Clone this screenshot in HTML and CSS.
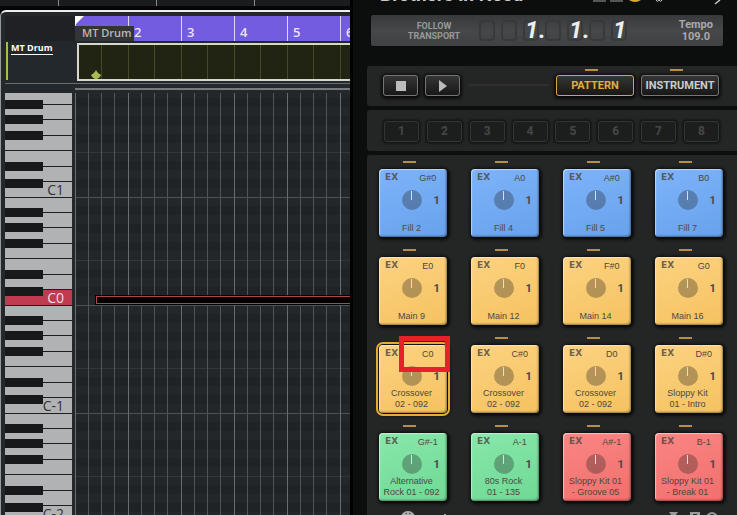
FILE: index.html
```
<!DOCTYPE html>
<html lang="en">
<head>
    <meta charset="UTF-8">
    <meta name="viewport" content="width=device-width, initial-scale=1.0">
    <title>MT Drum</title>
    <link rel="stylesheet" href="styles.css">
</head>
<body>
    <section class="editor">
        <div class="topbar"></div>
        <div class="frame">
            <div class="head">
                <div class="corner"></div>
                <div class="ruler">
                    <svg class="flag" width="9" height="9"><path d="M0 0H9L0 9Z" fill="#fff"/></svg>
                    <span class="part-name">MT Drum</span>
                    <span class="bar"></span>
                    <span class="bar">2</span>
                    <span class="bar">3</span>
                    <span class="bar">4</span>
                    <span class="bar">5</span>
                    <span class="bar">6</span>
                </div>
            </div>
            <div class="track">
                <div class="track-info"><a href="#">MT Drum</a></div>
                <div class="lane">
                    <svg class="marker" width="10" height="10"><path d="M5 0C6 2 8 4 10 5C9 7 8 8 6 9H4C2 8 1 7 0 5C2 4 4 2 5 0Z" fill="#a9bb50"/></svg>
                </div>
            </div>
            <div class="divider"></div>
            <div class="roll">
                <div class="keyboard" id="keyboard"></div>
                <div class="notes">
                    <div class="note"></div>
                </div>
            </div>
        </div>
    </section>

    <section class="plugin">
        <header class="titlebar">
            <h1>Brothers in Need</h1>
            <svg class="title-icons" width="145" height="6">
                <path d="M1 0H14V2H1ZM18 0H31V2H18Z" fill="#555"/>
                <path d="M37 0H49Q43 4 37 0Z" fill="#dba838"/>
                <path d="M64 0Q65 3 67 0Q69 3 70 0" fill="none" stroke="#ccc"/>
                <path d="M123 4L128 0" stroke="#ccc" stroke-width="1.5"/>
            </svg>
        </header>
        <div class="lcd">
            <span class="follow">FOLLOW<br>TRANSPORT</span>
            <div class="position">
                <span class="digit"></span>
                <span class="digit"></span>
                <span class="digit">1<span class="dot">.</span></span>
                <span class="digit"></span>
                <span class="digit">1<span class="dot">.</span></span>
                <span class="digit"></span>
                <span class="digit">1</span>
            </div>
            <span class="tempo">Tempo<br>109.0</span>
        </div>
        <div class="panel transport">
            <button class="btn" aria-label="Stop"><svg width="10" height="10"><path d="M0 0H10V10H0Z" fill="#bbb"/></svg></button>
            <button class="btn" aria-label="Play"><svg width="10" height="12"><path d="M1 0L9 6L1 12Z" fill="#bbb"/></svg></button>
            <span class="groove"></span>
            <div class="tab"><i class="led"></i><button class="btn wide active">PATTERN</button></div>
            <div class="tab"><i class="led"></i><button class="btn wide">INSTRUMENT</button></div>
        </div>
        <div class="panel scenes">
            <button class="scene">1</button>
            <button class="scene">2</button>
            <button class="scene">3</button>
            <button class="scene">4</button>
            <button class="scene">5</button>
            <button class="scene">6</button>
            <button class="scene">7</button>
            <button class="scene">8</button>
        </div>
        <div class="panel pads" id="pads"></div>
        <footer class="footer">
            <svg width="50" height="6"><path d="M1 6Q3 2 7 2Q11 2 13 6M7 2V6M3 5H11" fill="none" stroke="#aaa" stroke-width="2"/><path d="M44 4V6" stroke="#aaa" stroke-width="2"/></svg>
            <svg width="52" height="6"><path d="M0 2H9L6 6H3ZM21 2H31V6H21Z" fill="#999"/><path d="M24 4H28V6H24Z" fill="#252725"/><path d="M38 6Q43 0 48 6" fill="none" stroke="#999" stroke-width="2"/></svg>
        </footer>
    </section>

    <script>
        const keyboard = document.getElementById('keyboard');
        const pads = document.getElementById('pads');

        // One octave is drawn from B (top) down to C
        const whites = ['B', 'A', 'G', 'F', 'E', 'D', 'C'];
        const octaves = ['C1', 'C0', 'C-1', 'C-2'];

        octaves.forEach(name => {
            const octave = document.createElement('div');
            octave.className = 'octave';
            whites.forEach(key => {
                const white = document.createElement('button');
                white.className = 'white key-' + key.toLowerCase();
                white.setAttribute('aria-label', key + name.slice(1));
                if (key === 'C') {
                    white.innerText = name;
                    if (name === 'C0') white.classList.add('pressed');
                }
                octave.appendChild(white);
            });
            keyboard.appendChild(octave);
        });

        const padList = [
            ['G#0', 'Fill 2', 'blue'], ['A0', 'Fill 4', 'blue'], ['A#0', 'Fill 5', 'blue'], ['B0', 'Fill 7', 'blue'],
            ['E0', 'Main 9', 'yellow'], ['F0', 'Main 12', 'yellow'], ['F#0', 'Main 14', 'yellow'], ['G0', 'Main 16', 'yellow'],
            ['C0', 'Crossover<br>02 - 092', 'yellow selected'], ['C#0', 'Crossover<br>02 - 092', 'yellow'],
            ['D0', 'Crossover<br>02 - 092', 'yellow'], ['D#0', 'Sloppy Kit<br>01 - Intro', 'yellow'],
            ['G#-1', 'Alternative<br>Rock 01 - 092', 'green'], ['A-1', '80s Rock<br>01 - 135', 'green'],
            ['A#-1', 'Sloppy Kit 01<br>- Groove 05', 'red'], ['B-1', 'Sloppy Kit 01<br>- Break 01', 'red']
        ];

        padList.forEach(([note, label, type]) => {
            const slot = document.createElement('div');
            slot.className = 'slot';
            slot.innerHTML = `
                <i class="led"></i>
                <button class="pad ${type}">
                    <span class="ex">EX</span><span class="pitch">${note}</span>
                    <span class="knob"></span><span class="count">1</span>
                    <span class="label">${label}</span>
                </button>`;
            if (type.includes('selected')) {
                slot.innerHTML += '<div class="highlight"></div>';
            }
            pads.appendChild(slot);
        });
    </script>
</body>
</html>
```
FILE: styles.css
```
* {
    box-sizing: border-box;
    margin: 0;
    padding: 0;
}

body {
    display: grid;
    grid-template-columns: 350fr 387fr;
    height: 100vh;
    overflow: hidden;
    background-color: #000;
    font-family: "Liberation Sans", Arial, sans-serif;
    color: #bbb;
}

button {
    border: none;
    font-family: inherit;
    cursor: pointer;
}

/* Piano roll */
.editor {
    display: flex;
    flex-direction: column;
    min-width: 0;
    height: 100vh;
    overflow: hidden;
}

.topbar {
    flex: none;
    height: 10px;
    border-bottom: 4px solid #060606;
    background: repeating-linear-gradient(90deg, transparent 0 58px, #888 58px 59px, transparent 59px 98px) #1b1c1e;
}

.frame {
    flex: 1;
    display: flex;
    flex-direction: column;
    min-height: 0;
    padding: 4px 0 0 4px;
    border-top: 2px solid #eee;
    border-left: 1px solid #999;
    border-top-left-radius: 6px;
    background-color: #23282c;
}

.head {
    display: flex;
    flex: none;
    height: 25px;
}

.corner {
    width: 70px;
    background-color: #1f2124;
}

.ruler {
    position: relative;
    display: flex;
    flex: 1;
    overflow: hidden;
    background-color: #735ce0;
}

.flag {
    position: absolute;
    top: 0;
    left: 0;
}

.part-name {
    position: absolute;
    left: 0;
    bottom: 0;
    width: 59px;
    height: 15px;
    padding-left: 7px;
    background-color: #333436;
    color: #b8b8b8;
    font: 600 11px/14px "Open Sans", sans-serif;
    white-space: nowrap;
}

.bar {
    flex: none;
    width: 53px;
    padding: 8px 0 0 5px;
    border-left: 1px solid #ddd8f5;
    color: #e8e4fa;
    font: 600 13px/17px "Open Sans", sans-serif;
}

.track {
    display: flex;
    flex: none;
    height: 43px;
    border-bottom: 1px solid #676b6c;
}

.track-info {
    width: 70px;
    margin: 1px 0 3px 1px;
    padding-left: 3px;
    border-left: 2px solid #a9bb50;
    font: 700 9px/11px "Open Sans", sans-serif;
}

.track-info a {
    color: #fff;
    border-bottom: 1px solid #fff;
    text-decoration: none;
}

.lane {
    position: relative;
    flex: 1;
    margin: 2px 0 2px 1px;
    border: 2px solid #d5d7cf;
    border-right: none;
    background: repeating-linear-gradient(90deg, transparent 0 22px, #454b26 22px 23px, transparent 23px 49px, #454b26 49px 50px, transparent 50px 53px) #222413;
}

.marker {
    position: absolute;
    left: 12px;
    bottom: -1px;
}

.divider {
    flex: none;
    height: 2px;
    margin: 4px 0 3px 70px;
    background-color: #777b7c;
}

.roll {
    display: flex;
    flex: 1;
    min-height: 0;
    overflow: hidden;
}

.keyboard {
    width: 67px;
    margin-top: -3px;
}

.octave {
    display: flex;
    flex-direction: column;
    height: 108px;
}

.white {
    position: relative;
    flex: none;
    height: 15px;
    padding-right: 8px;
    border-bottom: 1px solid #1d1e1f;
    background-color: #b0b2b4;
    color: #333;
    font: 14px/14px "Open Sans", sans-serif;
    text-align: right;
}

.key-g,
.key-e,
.key-c {
    height: 16px;
}

.white::before {
    position: absolute;
    left: 0;
    top: 10px;
    z-index: 1;
    width: 38px;
    height: 9px;
    background-color: #18191a;
}

.key-b::before,
.key-a::before,
.key-g::before,
.key-e::before,
.key-d::before {
    content: "";
}

.key-e::before,
.key-g::before {
    top: 11px;
}

.key-d::before {
    top: 12px;
}

.white.pressed {
    background-color: #c03a50;
    color: #f3dfe2;
}

.notes {
    position: relative;
    flex: 1;
    margin-left: 3px;
    background:
        repeating-linear-gradient(90deg, #686c6e 0 1px, transparent 1px 53px),
        repeating-linear-gradient(90deg, transparent 0 13px, #505558 13px 14px, transparent 14px 26px, #505558 26px 27px, transparent 27px 39px, #505558 39px 40px, transparent 40px 53px),
        repeating-linear-gradient(180deg, transparent 0 59px, #33373a 59px 60px, transparent 60px 104px, #4d5254 104px 105px, transparent 105px 108px),
        repeating-linear-gradient(180deg, #23272a 0 5px, #1f2326 5px 14px, #23272a 14px 23px, #1f2326 23px 32px, #23272a 32px 41px, #1f2326 41px 50px, #23272a 50px 68px, #1f2326 68px 77px, #23272a 77px 86px, #1f2326 86px 95px, #23272a 95px 108px);
}

.note {
    position: absolute;
    top: 203px;
    left: 21px;
    right: 0;
    height: 8px;
    border: 1px solid #a8484c;
    border-right: none;
    outline: 1px solid #000;
    background-color: #080000;
}

/* Drum plugin */
.plugin {
    display: flex;
    flex-direction: column;
    height: 100vh;
    min-width: 0;
    margin-left: 3px;
    padding-left: 14px;
    overflow: hidden;
    background-color: #0c0d0d;
}

.titlebar {
    display: flex;
    flex: none;
    justify-content: space-between;
    height: 15px;
    padding-left: 13px;
    overflow: hidden;
}

.titlebar h1 {
    margin-top: -16px;
    color: #ccc;
    font: 700 19px/22px Roboto, sans-serif;
}

.lcd {
    display: flex;
    flex: none;
    align-items: center;
    height: 31px;
    margin: 0 14px 20px 4px;
    padding: 0 10px 0 35px;
    border-radius: 2px;
    background: linear-gradient(#38393a, #464748 50%, #404142);
    color: #999;
}

.follow {
    width: 56px;
    text-align: center;
    font: 700 9px/10px Roboto, sans-serif;
}

.tempo {
    margin-left: auto;
    color: #aaa;
    text-align: center;
    font: 700 11px/12px Roboto, sans-serif;
}

.position {
    display: flex;
    gap: 6px;
    margin-left: 17px;
}

/* unlit segments show as a faint outline behind the figure */
.digit {
    position: relative;
    width: 16px;
    height: 21px;
    border: 2px solid #38393a;
    border-radius: 4px;
    color: #eee;
    font: italic 700 24px/17px Roboto, sans-serif;
    text-align: right;
}

.dot {
    position: absolute;
    left: 13px;
    top: 0;
    font-style: normal;
}

.panel {
    flex: none;
    border-radius: 3px 0 0 3px;
    background-color: #242625;
}

.transport {
    display: flex;
    align-items: flex-end;
    gap: 7px;
    height: 40px;
    margin-bottom: 4px;
    padding: 0 18px 10px 16px;
}

.btn {
    display: flex;
    align-items: center;
    justify-content: center;
    width: 35px;
    height: 21px;
    border: 1px solid #747574;
    border-radius: 3px;
    background: linear-gradient(#343534, #171817);
    box-shadow: 0 1px 3px 2px #0b0b0b;
    color: #ccc;
}

.btn.wide {
    width: 78px;
    font: 700 11px/19px Roboto, sans-serif;
}

.btn.active {
    border-color: #d3a544;
    color: #e3ad3c;
}

.groove {
    flex: 1;
    height: 2px;
    margin: 0 0 10px 2px;
    background-color: #302f2e;
}

.tab {
    display: flex;
    flex-direction: column;
    align-items: center;
    gap: 4px;
}

.led {
    display: block;
    width: 13px;
    height: 2px;
    margin-right: 7px;
    background-color: #b98f42;
}

.scenes {
    display: flex;
    justify-content: space-between;
    height: 41px;
    margin-bottom: 4px;
    padding: 11px 18px 9px 17px;
}

.scene {
    width: 35px;
    height: 21px;
    border: 1px solid #333534;
    border-radius: 3px;
    background-color: #1c1e1d;
    box-shadow: 0 0 2px 2px #161716;
    color: #454746;
    font: 700 12px/19px Roboto, sans-serif;
}

.pads {
    display: grid;
    grid-template-columns: repeat(4, 68px);
    justify-content: space-between;
    row-gap: 12px;
    padding: 6px 14px 9px 12px;
    border-radius: 3px 0 0 0;
}

.slot {
    position: relative;
    display: flex;
    flex-direction: column;
    align-items: center;
    gap: 6px;
    height: 76px;
}

.pad {
    display: grid;
    grid-template-columns: 1fr 20px 1fr;
    grid-template-rows: 21px 22px 1fr;
    width: 68px;
    height: 68px;
    padding: 0 3px 0 0;
    border-radius: 4px;
    box-shadow: inset 1px 1px 1px rgba(255, 255, 255, 0.5), inset -1px -1px 2px rgba(0, 0, 0, 0.4), 1px 1px 3px 2px #0b0c0c;
    color: #4c4840;
    font-size: 9px;
    line-height: 11px;
}

.blue {
    background: linear-gradient(160deg, #7db3fa, #68a2ec);
}

.yellow {
    background: linear-gradient(160deg, #fdd281, #f4c260);
}

.green {
    background: linear-gradient(160deg, #87e8ab, #70d894);
}

.red {
    background: linear-gradient(160deg, #fa8583, #f0706c);
}

.ex {
    padding: 3px 0 0 6px;
    text-align: left;
    font: 700 9px/11px "DejaVu Sans", sans-serif;
    opacity: 0.8;
}

.pitch {
    grid-column: 2 / 4;
    padding: 4px 0 0 10px;
}

.knob {
    grid-column: 2;
    width: 20px;
    height: 20px;
    border-radius: 50%;
    background: linear-gradient(#ddd, #ddd) center 1px / 1px 9px no-repeat rgba(30, 30, 30, 0.32);
}

.count {
    padding: 5px 0 0 8px;
    font: 700 11px/12px Roboto, sans-serif;
}

.label {
    grid-column: 1 / 4;
    align-self: end;
    padding-bottom: 3px;
    white-space: nowrap;
}

.selected {
    outline: 2px solid #e5ac32;
    outline-offset: 1px;
}

.highlight {
    position: absolute;
    top: -1px;
    right: -3px;
    width: 51px;
    height: 36px;
    border: 5px solid #e8202a;
}

.footer {
    display: flex;
    flex: 1;
    justify-content: space-between;
    padding: 0 16px 0 34px;
    background-color: #242625;
}
```
